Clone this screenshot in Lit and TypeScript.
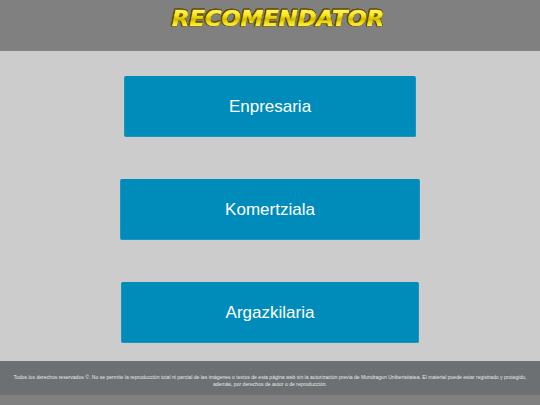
import { LitElement, html, css } from "lit";
import { customElement } from "lit/decorators.js";

const ROLES = [
  { name: "Enpresaria", width: 292 },
  { name: "Komertziala", width: 300 },
  { name: "Argazkilaria", width: 298 },
];

@customElement("app-root")
export class AppRoot extends LitElement {
  static styles = css`
    :host {
      display: flex;
      flex-direction: column;
      width: 540px;
      height: 405px;
      background: #808080;
      font-family: "Liberation Sans", Arial, sans-serif;
      overflow: hidden;
    }
    .header {
      height: 51px;
      flex: none;
      display: flex;
      justify-content: center;
      padding-top: 9px;
      box-sizing: border-box;
      background: #808080;
    }
    .logo {
      width: 213px;
      height: 20px;
      display: flex;
      justify-content: center;
      align-items: center;
      margin-left: 17px;
    }
    .logo span {
      display: block;
      font-family: "DejaVu Sans", sans-serif;
      font-weight: 700;
      font-style: oblique;
      font-size: 21.5px;
      line-height: 20px;
      white-space: nowrap;
      letter-spacing: -0.1px;
      transform: scale(1.06, 0.98);
      background: linear-gradient(180deg, #fff27a 0%, #ffe81a 30%, #d2bc00 52%, #eed806 64%, #fff04a 84%, #c4a800 100%);
      -webkit-background-clip: text;
      background-clip: text;
      color: transparent;
      -webkit-text-stroke: 0.6px transparent;
      filter: drop-shadow(0.4px 0 0 #5f5000) drop-shadow(-0.4px 0 0 #5f5000) drop-shadow(0 0.5px 0 #5f5000) drop-shadow(0 -0.3px 0 #5f5000);
    }
    .main {
      height: 310px;
      flex: none;
      box-sizing: border-box;
      background: #cccccc;
      display: flex;
      flex-direction: column;
      align-items: center;
      gap: 42px;
      padding-top: 25px;
    }
    .role {
      height: 61px;
      box-sizing: border-box;
      display: flex;
      align-items: center;
      justify-content: center;
      border: 1px solid #1b96c1;
      border-top-color: #008cba;
      border-radius: 2px;
      background: #008cba;
      color: #fff;
      font-size: 17px;
    }
    .footer {
      height: 34px;
      flex: none;
      box-sizing: border-box;
      background: #6d7073;
      color: #e6e8e9;
      font-size: 5.08px;
      line-height: 6.5px;
      text-align: center;
      padding: 13px 10px 0;
    }
  `;

  render() {
    return html`
      <div class="header"><div class="logo"><span>RECOMENDATOR</span></div></div>
      <div class="main">
        ${ROLES.map(
          (r) => html`<div class="role" style="width:${r.width}px">${r.name}</div>`
        )}
      </div>
      <div class="footer">
        Todos los derechos reservados ©. No se permite la reproducción total ni parcial de las imágenes o textos de esta página web sin la autorización previa de Mondragon Unibertsitatea. El material puede estar registrado y protegido, además, por derechos de autor o de reproducción.
      </div>
    `;
  }
}
